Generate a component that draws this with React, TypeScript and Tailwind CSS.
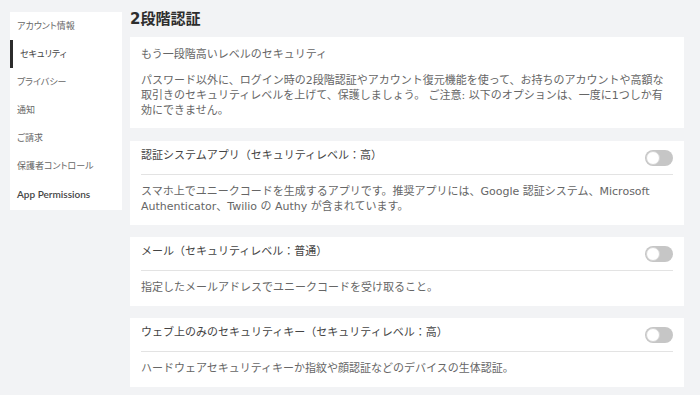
import React from "react";

const NAV = [
  "アカウント情報",
  "セキュリティ",
  "プライバシー",
  "通知",
  "ご請求",
  "保護者コントロール",
  "App Permissions",
];

const OPTIONS: { title: string; desc: React.ReactNode }[] = [
  {
    title: "認証システムアプリ（セキュリティレベル：高）",
    desc: (
      <>
        スマホ上でユニークコードを生成するアプリです。推奨アプリには、Google 認証システム、Microsoft
        <br />
        Authenticator、Twilio の Authy が含まれています。
      </>
    ),
  },
  {
    title: "メール（セキュリティレベル：普通）",
    desc: "指定したメールアドレスでユニークコードを受け取ること。",
  },
  {
    title: "ウェブ上のみのセキュリティキー（セキュリティレベル：高）",
    desc: "ハードウェアセキュリティキーか指紋や顔認証などのデバイスの生体認証。",
  },
];

const Toggle: React.FC = () => (
  <div className="w-[28px] h-[16px] rounded-full bg-[#c6c6c6] flex items-center px-[1px]">
    <div className="w-[14px] h-[14px] rounded-full bg-white border border-[#d4d4d4]" />
  </div>
);

const App: React.FC = () => {
  return (
    <div className="w-[700px] h-[395px] bg-[#f2f3f5] overflow-hidden font-['Lato','Noto_Sans_CJK_JP',sans-serif]">
      <div className="flex items-start gap-[8px] pl-[10px] pr-[16px]">
        {/* Sidebar */}
        <nav className="mt-[12px] w-[112px] bg-white pb-[2px] flex flex-col">
          {NAV.map((item, i) => (
            <div
              key={item}
              className={
                "h-[28px] flex items-center pl-[7px] text-[9px] [font-feature-settings:'palt'] " +
                (i === 1
                  ? "border-l-[3px] border-[#2b2b2b] pl-[4px] text-[#444]"
                  : i === 6
                  ? "text-[10px] text-[#444] font-semibold"
                  : "text-[#666]")
              }
            >
              {item}
            </div>
          ))}
        </nav>

        {/* Main */}
        <main className="flex-1 pt-[9px] font-['DejaVu_Sans','Noto_Sans_CJK_JP',sans-serif]">
          <h1 className="text-[15px] leading-[20px] font-bold text-[#2d2d2d] mb-[8px]">
            2段階認証
          </h1>

          <div className="flex flex-col">
            <section className="h-[91px] bg-white px-[11px] pt-[10px] text-[11px] leading-[15px] text-[#666]">
              <p className="h-[15px]">もう一段階高いレベルのセキュリティ</p>
              <p className="mt-[11px]">
                パスワード以外に、ログイン時の2段階認証やアカウント復元機能を使って、お持ちのアカウントや高額な
                <br />
                取引きのセキュリティレベルを上げて、保護しましょう。 ご注意: 以下のオプションは、一度に1つしか有
                <br />
                効にできません。
              </p>
            </section>

            {OPTIONS.map((o, i) => (
              <section
                key={o.title}
                className={
                  "bg-white px-[11px] " + (i === 0 ? "mt-[13px] h-[84px]" : "mt-[12px] h-[69px]")
                }
              >
                <div className="h-[34px] flex items-center justify-between border-b border-[#e3e3e3]">
                  <span className="text-[11px] text-[#444] pb-[3px]">{o.title}</span>
                  <Toggle />
                </div>
                <p className="pt-[9px] text-[11px] leading-[15px] text-[#666]">{o.desc}</p>
              </section>
            ))}
          </div>
        </main>
      </div>
    </div>
  );
};

export default App;
